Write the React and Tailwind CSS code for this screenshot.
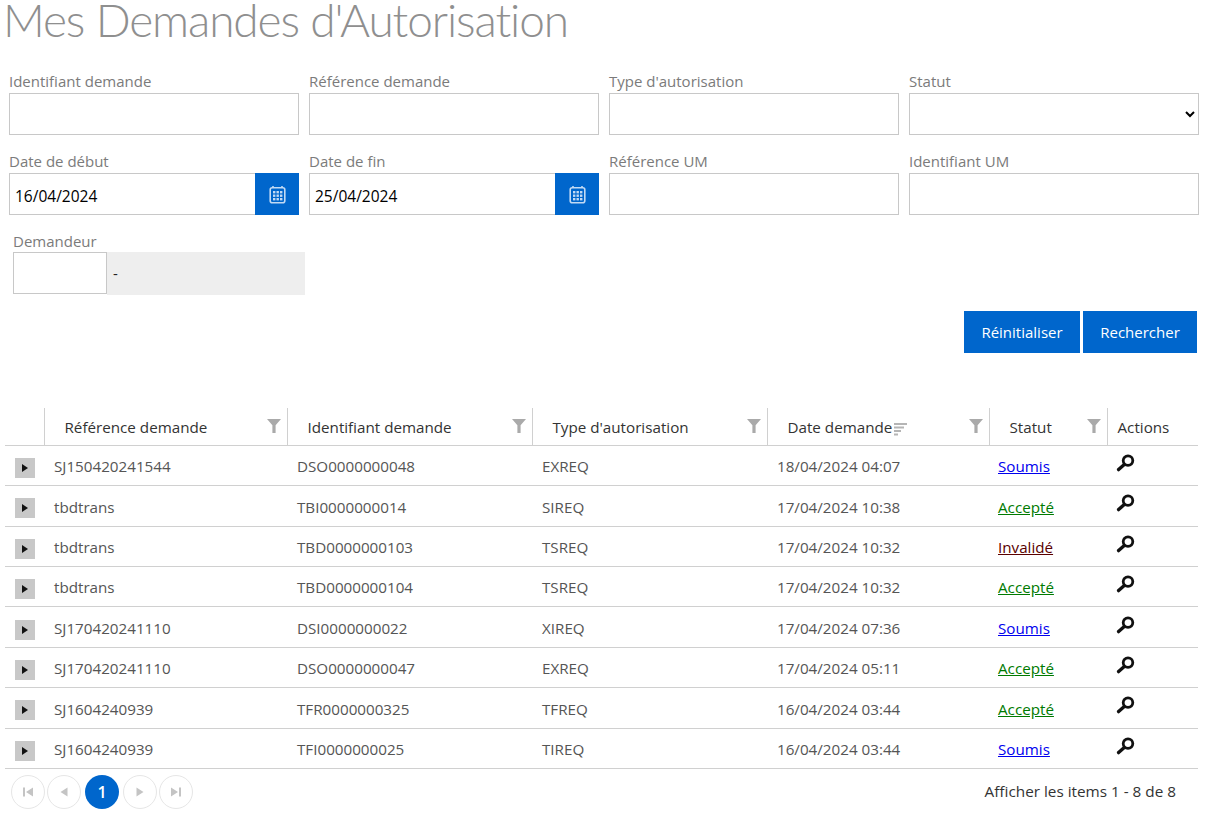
import React from 'react';

const font = { fontFamily: '"Open Sans", "Noto Sans", sans-serif' };

const rows = [
  ['SJ150420241544', 'DSO0000000048', 'EXREQ', '18/04/2024 04:07', 'Soumis'],
  ['tbdtrans', 'TBI0000000014', 'SIREQ', '17/04/2024 10:38', 'Accepté'],
  ['tbdtrans', 'TBD0000000103', 'TSREQ', '17/04/2024 10:32', 'Invalidé'],
  ['tbdtrans', 'TBD0000000104', 'TSREQ', '17/04/2024 10:32', 'Accepté'],
  ['SJ170420241110', 'DSI0000000022', 'XIREQ', '17/04/2024 07:36', 'Soumis'],
  ['SJ170420241110', 'DSO0000000047', 'EXREQ', '17/04/2024 05:11', 'Accepté'],
  ['SJ1604240939', 'TFR0000000325', 'TFREQ', '16/04/2024 03:44', 'Accepté'],
  ['SJ1604240939', 'TFI0000000025', 'TIREQ', '16/04/2024 03:44', 'Soumis'],
];

const statusClass = {
  Soumis: 'text-[#0000ee]',
  Accepté: 'text-[#007a00]',
  Invalidé: 'text-[#5a0000]',
};

function Calendar() {
  return (
    <svg width="17" height="19" viewBox="0 0 17 19" fill="none" className="text-[#c2daf4]">
      <path d="M4 1v2M13 1v2" stroke="currentColor" strokeWidth="1.6" />
      <rect x="1.2" y="2.8" width="14.6" height="15" rx="2" stroke="currentColor" strokeWidth="1.6" />
      {[6, 9.5, 13].map((y) => [4, 7.5, 11].map((x) => (
        <rect key={x + '-' + y} x={x} y={y} width="2.4" height="2.4" fill="currentColor" />
      )))}
    </svg>
  );
}

function Field({ label, children }) {
  return (
    <div className="px-[5px]">
      <div className="h-[24px] text-[15px] leading-[22px] text-[#7b7b7b] pt-[1px]">{label}</div>
      {children}
    </div>
  );
}

function TextBox() {
  return <input className="block w-full h-[42px] border border-[#c8c8c8] bg-white" />;
}

function DateBox({ value }) {
  return (
    <div className="flex h-[42px]">
      <input
        defaultValue={value}
        className="min-w-0 flex-1 border border-[#c8c8c8] border-r-0 px-[5px] pt-[5px] text-[15.5px] text-black bg-white"
      />
      <div className="w-[44px] bg-[#0066cc] flex items-center justify-center">
        <Calendar />
      </div>
    </div>
  );
}

function Filter() {
  return (
    <svg width="14" height="14" viewBox="0 0 14 14" className="absolute right-[6px] top-[11px]">
      <path d="M0 0h14L8.6 6.2V14H5.4V6.2z" fill="#aaaaaa" />
    </svg>
  );
}

function SortIcon() {
  return (
    <svg width="13" height="14" viewBox="0 0 13 14" className="inline-block ml-[2px] align-[-3px]">
      <rect x="0" y="1" width="13" height="2" fill="#b5b5b5" />
      <rect x="0" y="4.5" width="10" height="2" fill="#b5b5b5" />
      <rect x="0" y="8" width="7" height="2" fill="#b5b5b5" />
      <rect x="0" y="11.5" width="4" height="2" fill="#b5b5b5" />
    </svg>
  );
}

function Loupe() {
  return (
    <svg width="19" height="18" viewBox="0 0 19 18" fill="none">
      <circle cx="12" cy="6.6" r="4.8" stroke="#111" strokeWidth="2.8" />
      <path d="M8 10.8L2.6 15.6" stroke="#111" strokeWidth="3.4" strokeLinecap="round" />
    </svg>
  );
}

function Th({ children, filter, className }) {
  return (
    <th className={'relative font-normal text-left text-[15.2px] text-[#333] border-l border-[#d0d0d0] pt-[2px] ' + (className || '')}>
      {children}
      {filter && <Filter />}
    </th>
  );
}

function PageButton({ children, active }) {
  return (
    <div
      className={
        active
          ? 'w-[34px] h-[34px] mx-[2px] rounded-full bg-[#0066cc] text-white text-[16px] font-semibold flex items-center justify-center'
          : 'w-[34px] h-[34px] rounded-full border border-[#e6e6e6] flex items-center justify-center'
      }
    >
      {children}
    </div>
  );
}

function PagerIcon({ d }) {
  return (
    <svg width="12" height="12" viewBox="0 0 12 12">
      <path d={d} fill="#c4c4c4" />
    </svg>
  );
}

export default function App() {
  return (
    <div className="w-[1205px] h-[813px] overflow-hidden bg-white" style={font}>
      <h1 className="text-[46px] leading-[40px] tracking-[-1.1px] font-light text-[#8f8f8f] pl-[3px] h-[69px] font-['Lato',sans-serif]">
        Mes Demandes d'Autorisation
      </h1>

      <div className="grid grid-cols-[repeat(4,300px)] ml-[4px] gap-y-[14px]">
        <Field label="Identifiant demande"><TextBox /></Field>
        <Field label="Référence demande"><TextBox /></Field>
        <Field label="Type d'autorisation"><TextBox /></Field>
        <Field label="Statut">
          <select className="block w-full h-[42px] border border-[#c8c8c8] bg-white text-[15px] appearance-auto" />
        </Field>
        <Field label="Date de début"><DateBox value="16/04/2024" /></Field>
        <Field label="Date de fin"><DateBox value="25/04/2024" /></Field>
        <Field label="Référence UM"><TextBox /></Field>
        <Field label="Identifiant UM"><TextBox /></Field>
      </div>

      <div className="ml-[13px] mt-[15px]">
        <div className="h-[22px] text-[15px] leading-[22px] text-[#7b7b7b]">Demandeur</div>
        <div className="flex">
          <input className="w-[94px] h-[42px] border border-[#c8c8c8] bg-white" />
          <div className="w-[198px] h-[43px] bg-[#eeeeee] pl-[6px] pt-[10px] text-[15px] leading-[22px] text-[#222]">-</div>
        </div>
      </div>

      <div className="flex justify-end gap-[3px] pr-[8px] mt-[16px]">
        <button className="w-[116px] h-[42px] bg-[#0066cc] text-white text-[15px]">Réinitialiser</button>
        <button className="w-[114px] h-[42px] bg-[#0066cc] text-white text-[15px]">Rechercher</button>
      </div>

      <table className="table-fixed border-collapse ml-[5px] mt-[55px] w-[1193px]">
        <colgroup>
          <col className="w-[39px]" />
          <col className="w-[243px]" />
          <col className="w-[245px]" />
          <col className="w-[235px]" />
          <col className="w-[222px]" />
          <col className="w-[118px]" />
          <col className="w-[91px]" />
        </colgroup>
        <thead>
          <tr className="h-[37.4px] border-b border-[#d0d0d0]">
            <th />
            <Th filter className="pl-[20px]">Référence demande</Th>
            <Th filter className="pl-[20px]">Identifiant demande</Th>
            <Th filter className="pl-[20px]">Type d'autorisation</Th>
            <Th filter className="pl-[20px]">Date demande<SortIcon /></Th>
            <Th filter className="pl-[20px]">Statut</Th>
            <Th className="pl-[10px]">Actions</Th>
          </tr>
        </thead>
        <tbody>
          {rows.map((r, i) => (
            <tr key={i} className="h-[40.4px] border-b border-[#d0d0d0] text-[15.2px] text-[#555]">
              <td className="pl-[10px]">
                <div className="w-[20px] h-[20px] bg-[#c8c8c8] flex items-center justify-center mt-[5px]">
                  <svg width="6" height="8" viewBox="0 0 6 8"><path d="M0 0l6 4-6 4z" fill="#111" /></svg>
                </div>
              </td>
              <td className="pl-[10px] pt-[2px]">{r[0]}</td>
              <td className="pl-[10px] pt-[2px]">{r[1]}</td>
              <td className="pl-[10px] pt-[2px]">{r[2]}</td>
              <td className="pl-[10px] pt-[2px]">{r[3]}</td>
              <td className="pl-[9px] pt-[2px]">
                <a href="#" className={'underline ' + statusClass[r[4]]}>{r[4]}</a>
              </td>
              <td className="pl-[9px] pb-[5px]"><Loupe /></td>
            </tr>
          ))}
        </tbody>
      </table>

      <div className="flex items-center justify-between ml-[11px] mr-[29px] mt-[6px]">
        <div className="flex items-center gap-[2px]">
          <PageButton><PagerIcon d="M1 1.5h2v9H1zM11 1.5v9L4 6z" /></PageButton>
          <PageButton><PagerIcon d="M9.5 1.5v9L2.5 6z" /></PageButton>
          <PageButton active>1</PageButton>
          <PageButton><PagerIcon d="M2.5 1.5v9l7-4.5z" /></PageButton>
          <PageButton><PagerIcon d="M1 1.5v9L8 6zM9 1.5h2v9H9z" /></PageButton>
        </div>
        <div className="text-[15.3px] text-[#333] -mt-[2px]">Afficher les items 1 - 8 de 8</div>
      </div>
    </div>
  );
}
